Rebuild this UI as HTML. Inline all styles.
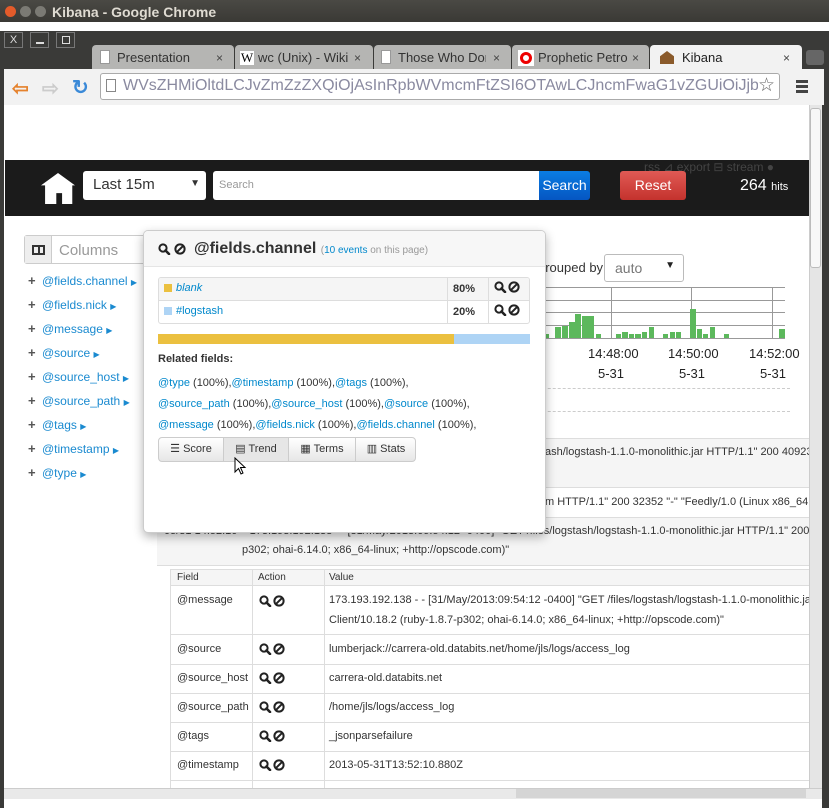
<!DOCTYPE html>
<html><head><meta charset="utf-8"><style>
*{box-sizing:border-box;margin:0;padding:0}
body{width:829px;height:808px;overflow:hidden;background:#3c3b37;font-family:"Liberation Sans",sans-serif;position:relative;font-size:12px}
.a{position:absolute}
.lnk{color:#0088cc}
.blue{color:#1a8ad0}
.cl div{position:relative;padding-left:16px;height:24px;line-height:24px;white-space:nowrap}
.cl b{position:absolute;left:2px;top:0;color:#555;font-size:13px}
</style></head><body>
<svg width="0" height="0" style="position:absolute"><defs>
<g id="mg"><circle cx="5" cy="5" r="3.6" fill="none" stroke="#222" stroke-width="2"/><path d="M7.5 7.5 L11 11" stroke="#222" stroke-width="2.6" stroke-linecap="round"/></g>
<g id="bn"><circle cx="6" cy="6" r="4.6" fill="none" stroke="#222" stroke-width="2"/><path d="M2.8 9.2 L9.2 2.8" stroke="#222" stroke-width="2"/></g>
</defs></svg>
<div class="a" style="left:0;top:0;width:829px;height:22px;background:linear-gradient(#4a4944,#3a3935)"></div>
<div class="a" style="left:5px;top:6px;width:11px;height:11px;border-radius:50%;background:#e45b2a"></div>
<div class="a" style="left:20px;top:6px;width:11px;height:11px;border-radius:50%;background:#7b7a74"></div>
<div class="a" style="left:35px;top:6px;width:11px;height:11px;border-radius:50%;background:#7b7a74"></div>
<div class="a" style="left:52px;top:4px;color:#dfdbd2;font-size:14px;font-weight:bold">Kibana - Google Chrome</div>
<div class="a" style="left:0;top:22px;width:829px;height:9px;background:#fff"></div>
<div class="a" style="left:0;top:31px;width:829px;height:777px;background:#3a3a38"></div>
<div class="a" style="left:4px;top:32px;width:19px;height:16px;border:1px solid #777;color:#ddd;font-size:11px;text-align:center;line-height:14px">X</div>
<div class="a" style="left:30px;top:32px;width:19px;height:16px;border:1px solid #777"><div class="a" style="left:5px;top:9px;width:8px;height:2px;background:#ddd"></div></div>
<div class="a" style="left:56px;top:32px;width:19px;height:16px;border:1px solid #777"><div class="a" style="left:5px;top:3px;width:8px;height:8px;border:1.5px solid #ddd"></div></div>
<div class="a" style="left:92px;top:45px;width:142px;height:25px;background:#b5b5b3;border-radius:4px 4px 0 0"></div>
<div class="a" style="left:235px;top:45px;width:138px;height:25px;background:#b5b5b3;border-radius:4px 4px 0 0"></div>
<div class="a" style="left:374px;top:45px;width:137px;height:25px;background:#b5b5b3;border-radius:4px 4px 0 0"></div>
<div class="a" style="left:512px;top:45px;width:137px;height:25px;background:#b5b5b3;border-radius:4px 4px 0 0"></div>
<div class="a" style="left:650px;top:45px;width:152px;height:25px;background:#f2f2f2;border-radius:4px 4px 0 0"></div>
<div class="a" style="left:806px;top:50px;width:18px;height:15px;background:#666;border-radius:3px"></div>
<div class="a" style="left:100px;top:50px;width:10px;height:14px;background:#fff;border:1px solid #999"></div>
<div class="a" style="left:117px;top:50px;font-size:13px;color:#333">Presentation</div><div class="a" style="left:216px;top:51px;color:#444">×</div>
<div class="a" style="left:240px;top:51px;width:14px;height:14px;background:#fff;font-family:'Liberation Serif';font-size:13px;line-height:14px;text-align:center">W</div>
<div class="a" style="left:258px;top:50px;font-size:13px;color:#333;width:90px;overflow:hidden;white-space:nowrap">wc (Unix) - Wikip</div><div class="a" style="left:354px;top:51px;color:#444">×</div>
<div class="a" style="left:381px;top:50px;width:10px;height:14px;background:#fff;border:1px solid #999"></div>
<div class="a" style="left:398px;top:50px;font-size:13px;color:#333;width:88px;overflow:hidden;white-space:nowrap">Those Who Don</div><div class="a" style="left:493px;top:51px;color:#444">×</div>
<div class="a" style="left:518px;top:50px;width:16px;height:16px;background:#fff"><div class="a" style="left:2px;top:2px;width:12px;height:12px;border:3px solid #e00;border-radius:50%"></div></div>
<div class="a" style="left:538px;top:50px;font-size:13px;color:#333;width:90px;overflow:hidden;white-space:nowrap">Prophetic Petro</div><div class="a" style="left:632px;top:51px;color:#444">×</div>
<div class="a" style="left:660px;top:51px;width:14px;height:13px;background:#8a5a2b;clip-path:polygon(50% 0,100% 40%,100% 100%,0 100%,0 40%)"></div>
<div class="a" style="left:682px;top:50px;font-size:13px;color:#222">Kibana</div><div class="a" style="left:783px;top:51px;color:#444">×</div>
<div class="a" style="left:4px;top:69px;width:820px;height:36px;background:#f2f2f2"></div>
<div class="a" style="left:12px;top:76px;color:#e5822d;font-size:20px;font-weight:bold">⇦</div>
<div class="a" style="left:42px;top:76px;color:#ccc;font-size:20px;font-weight:bold">⇨</div>
<div class="a" style="left:72px;top:75px;color:#3b8ad8;font-size:20px;font-weight:bold">↻</div>
<div class="a" style="left:100px;top:73px;width:680px;height:27px;background:#fff;border:1px solid #aaa;border-radius:3px"></div>
<div class="a" style="left:106px;top:79px;width:10px;height:13px;border:1px solid #888"></div>
<div class="a" style="left:123px;top:77px;font-size:16px;color:#8a8aa0;white-space:nowrap;width:635px;overflow:hidden">WVsZHMiOltdLCJvZmZzZXQiOjAsInRpbWVmcmFtZSI6OTAwLCJncmFwaG1vZGUiOiJjb3VudCJ9</div>
<div class="a" style="left:758px;top:74px;font-size:19px;color:#666">☆</div>
<div class="a" style="left:796px;top:80px;width:12px;height:3px;background:#444;box-shadow:0 5px #444,0 10px #444"></div>
<div class="a" style="left:4px;top:105px;width:805px;height:683px;background:#fff;overflow:hidden">
 <div class="a" style="left:1px;top:55px;width:804px;height:56px;background:#1b1b1b"></div>
 <div class="a" style="left:37px;top:68px;width:34px;height:31px;background:#fff;clip-path:polygon(50% 0,100% 40%,92% 40%,92% 100%,62% 100%,62% 65%,45% 65%,45% 100%,12% 100%,12% 40%,0 40%)"></div>
 <div class="a" style="left:79px;top:66px;width:123px;height:29px;background:#fff;border-radius:3px;font-size:15px;color:#333;padding:5px 10px">Last 15m<span style="position:absolute;right:6px;top:7px;font-size:10px">▼</span></div>
 <div class="a" style="left:209px;top:66px;width:327px;height:29px;background:#fff;border-radius:3px 0 0 3px;color:#999;font-size:11px;padding:8px 6px">Search</div>
 <div class="a" style="left:535px;top:66px;width:51px;height:29px;background:linear-gradient(#0a7de3,#0556c2);border-radius:0 3px 3px 0;color:#fff;font-size:14px;text-align:center;line-height:29px">Search</div>
 <div class="a" style="left:616px;top:66px;width:66px;height:29px;background:linear-gradient(#e05a55,#c4322d);border-radius:3px;color:#fff;font-size:14px;text-align:center;line-height:29px">Reset</div>
 <div class="a" style="left:640px;top:55px;color:#444;font-size:12px">rss ⊿ export ⊟ stream ●</div>
 <div class="a" style="left:736px;top:72px;color:#fff;font-size:16px">264 <span style="font-size:11px">hits</span></div>
 <div class="a" style="left:20px;top:130px;width:130px;height:29px;border:1px solid #ccc;border-radius:3px"><div class="a" style="left:0;top:0;width:27px;height:27px;background:#eee;border-right:1px solid #ccc"></div><div class="a" style="left:7px;top:9px;width:13px;height:10px;border:2px solid #333"></div><div class="a" style="left:13px;top:9px;width:2px;height:10px;background:#333"></div><div class="a" style="left:34px;top:6px;color:#999;font-size:15px">Columns</div></div>
 <div class="a cl" style="left:22px;top:164px;font-size:12px">
  <div><b>+</b><span class="blue">@fields.channel</span> <span class="blue" style="font-size:8px">▶</span></div>
  <div><b>+</b><span class="blue">@fields.nick</span> <span class="blue" style="font-size:8px">▶</span></div>
  <div><b>+</b><span class="blue">@message</span> <span class="blue" style="font-size:8px">▶</span></div>
  <div><b>+</b><span class="blue">@source</span> <span class="blue" style="font-size:8px">▶</span></div>
  <div><b>+</b><span class="blue">@source_host</span> <span class="blue" style="font-size:8px">▶</span></div>
  <div><b>+</b><span class="blue">@source_path</span> <span class="blue" style="font-size:8px">▶</span></div>
  <div><b>+</b><span class="blue">@tags</span> <span class="blue" style="font-size:8px">▶</span></div>
  <div><b>+</b><span class="blue">@timestamp</span> <span class="blue" style="font-size:8px">▶</span></div>
  <div><b>+</b><span class="blue">@type</span> <span class="blue" style="font-size:8px">▶</span></div>
 </div>
 <div class="a" style="left:534px;top:155px;font-size:13px;color:#333">grouped by</div>
 <div class="a" style="left:600px;top:149px;width:80px;height:28px;border:1px solid #bbb;border-radius:3px;color:#777;font-size:14px;padding:5px 10px">auto<span style="position:absolute;right:8px;top:5px;font-size:10px;color:#222">▼</span></div>
 <svg class="a" style="left:536px;top:175px" width="250" height="65">
  <g stroke="#999" stroke-width="1"><line x1="0" y1="7.5" x2="245" y2="7.5"/><line x1="0" y1="20.5" x2="245" y2="20.5"/><line x1="0" y1="32.5" x2="245" y2="32.5"/><line x1="0" y1="45.5" x2="245" y2="45.5"/><line x1="0" y1="58.5" x2="245" y2="58.5"/><line x1="71.5" y1="7" x2="71.5" y2="58"/><line x1="151.5" y1="7" x2="151.5" y2="58"/><line x1="232.5" y1="7" x2="232.5" y2="58"/></g>
  <g fill="#5cb85c"><rect x="5" y="54" width="4" height="4"/><rect x="15" y="47" width="6" height="11"/><rect x="22" y="46" width="6" height="12"/><rect x="29" y="42" width="6" height="16"/><rect x="35" y="34" width="6" height="24"/><rect x="42" y="36" width="6" height="22"/><rect x="48" y="36" width="6" height="22"/><rect x="56" y="54" width="5" height="4"/><rect x="76" y="54" width="5" height="4"/><rect x="82" y="52" width="6" height="6"/><rect x="89" y="54" width="5" height="4"/><rect x="95" y="54" width="6" height="4"/><rect x="102" y="52" width="5" height="6"/><rect x="109" y="47" width="5" height="11"/><rect x="123" y="54" width="5" height="4"/><rect x="130" y="52" width="5" height="6"/><rect x="136" y="52" width="5" height="6"/><rect x="150" y="29" width="6" height="29"/><rect x="157" y="49" width="5" height="9"/><rect x="163" y="54" width="5" height="4"/><rect x="170" y="47" width="5" height="11"/><rect x="184" y="54" width="5" height="4"/><rect x="239" y="49" width="6" height="9"/></g>
 </svg>
 <div class="a" style="left:530px;top:241px;font-size:13px;color:#222">0</div>
 <div class="a" style="left:584px;top:241px;font-size:13px;color:#222">14:48:00</div>
 <div class="a" style="left:664px;top:241px;font-size:13px;color:#222">14:50:00</div>
 <div class="a" style="left:745px;top:241px;font-size:13px;color:#222">14:52:00</div>
 <div class="a" style="left:594px;top:261px;font-size:13px;color:#222">5-31</div>
 <div class="a" style="left:675px;top:261px;font-size:13px;color:#222">5-31</div>
 <div class="a" style="left:756px;top:261px;font-size:13px;color:#222">5-31</div>
 <div class="a" style="left:150px;top:283px;width:636px;border-top:1px dashed #ccc"></div>
 <div class="a" style="left:150px;top:306px;width:636px;border-top:1px dashed #ccc"></div>
 <div class="a" style="left:153px;top:333px;width:652px;height:49px;background:#f5f5f5;border-top:1px solid #ddd"></div>
 <div class="a" style="left:541px;top:341px;font-size:11px;color:#333;white-space:nowrap">ash/logstash-1.1.0-monolithic.jar HTTP/1.1" 200 409239</div>
 <div class="a" style="left:153px;top:382px;width:652px;height:31px;border-top:1px solid #ddd;border-bottom:1px solid #ddd"></div>
 <div class="a" style="left:541px;top:391px;font-size:11px;color:#333;white-space:nowrap">m HTTP/1.1" 200 32352 "-" "Feedly/1.0 (Linux x86_64;</div>
 <div class="a" style="left:153px;top:413px;width:652px;height:48px;background:#f5f5f5;border-bottom:1px solid #ddd"></div>
 <div class="a" style="left:160px;top:420px;font-size:11px;color:#333;white-space:nowrap">05/31 14:52:10 &nbsp;&nbsp; 173.193.192.138 &nbsp;&nbsp;&nbsp; [31/May/2013:09:54:12 -0400] "GET /files/logstash/logstash-1.1.0-monolithic.jar HTTP/1.1" 200 409</div>
 <div class="a" style="left:238px;top:439px;font-size:11px;color:#333;white-space:nowrap">p302; ohai-6.14.0; x86_64-linux; +http://opscode.com)"</div>
 <div class="a" style="left:166px;top:464px;width:640px;height:230px;border:1px solid #ddd;font-size:11px;color:#333">
  <div class="a" style="left:0;top:0;width:640px;height:16px;background:#f5f5f5;border-bottom:1px solid #ddd"></div>
  <div class="a" style="left:81px;top:0;width:1px;height:230px;background:#ddd"></div>
  <div class="a" style="left:153px;top:0;width:1px;height:230px;background:#ddd"></div>
  <div class="a" style="left:6px;top:2px;font-size:10px">Field</div><div class="a" style="left:87px;top:2px;font-size:10px">Action</div><div class="a" style="left:158px;top:2px;font-size:10px">Value</div>
  <div class="a" style="left:0;top:64px;width:640px;border-top:1px solid #ddd"></div>
  <div class="a" style="left:0;top:94px;width:640px;border-top:1px solid #ddd"></div>
  <div class="a" style="left:0;top:123px;width:640px;border-top:1px solid #ddd"></div>
  <div class="a" style="left:0;top:152px;width:640px;border-top:1px solid #ddd"></div>
  <div class="a" style="left:0;top:181px;width:640px;border-top:1px solid #ddd"></div>
  <div class="a" style="left:0;top:210px;width:640px;border-top:1px solid #ddd"></div>
  <div class="a" style="left:6px;top:24px">@message</div><div class="a" style="left:158px;top:24px;white-space:nowrap">173.193.192.138 - - [31/May/2013:09:54:12 -0400] "GET /files/logstash/logstash-1.1.0-monolithic.jar H</div>
  <div class="a" style="left:158px;top:44px;white-space:nowrap">Client/10.18.2 (ruby-1.8.7-p302; ohai-6.14.0; x86_64-linux; +http://opscode.com)"</div>
  <div class="a" style="left:6px;top:73px">@source</div><div class="a" style="left:158px;top:73px">lumberjack://carrera-old.databits.net/home/jls/logs/access_log</div>
  <div class="a" style="left:6px;top:102px">@source_host</div><div class="a" style="left:158px;top:102px">carrera-old.databits.net</div>
  <div class="a" style="left:6px;top:131px">@source_path</div><div class="a" style="left:158px;top:131px">/home/jls/logs/access_log</div>
  <div class="a" style="left:6px;top:160px">@tags</div><div class="a" style="left:158px;top:160px">_jsonparsefailure</div>
  <div class="a" style="left:6px;top:189px">@timestamp</div><div class="a" style="left:158px;top:189px">2013-05-31T13:52:10.880Z</div>
  <svg class="a" style="left:88px;top:25px" width="28" height="12"><use href="#mg"/><use href="#bn" x="14"/></svg>
  <svg class="a" style="left:88px;top:73px" width="28" height="12"><use href="#mg"/><use href="#bn" x="14"/></svg>
  <svg class="a" style="left:88px;top:102px" width="28" height="12"><use href="#mg"/><use href="#bn" x="14"/></svg>
  <svg class="a" style="left:88px;top:131px" width="28" height="12"><use href="#mg"/><use href="#bn" x="14"/></svg>
  <svg class="a" style="left:88px;top:160px" width="28" height="12"><use href="#mg"/><use href="#bn" x="14"/></svg>
  <svg class="a" style="left:88px;top:189px" width="28" height="12"><use href="#mg"/><use href="#bn" x="14"/></svg>
 </div>
 <div class="a" style="left:139px;top:125px;width:403px;height:303px;background:#fff;border:1px solid #ccc;border-radius:5px;box-shadow:0 4px 10px rgba(0,0,0,.3);overflow:hidden">
  <div class="a" style="left:0;top:0;width:403px;height:36px;background:#f7f7f7;border-bottom:1px solid #e5e5e5"></div>
  <svg class="a" style="left:14px;top:12px" width="28" height="12"><use href="#mg"/><use href="#bn" x="16"/></svg>
  <div class="a" style="left:50px;top:9px;font-size:16px;font-weight:bold;color:#333;white-space:nowrap">@fields.channel <span style="font-size:10px;font-weight:normal;color:#999">(<span class="lnk">10 events</span> on this page)</span></div>
  <div class="a" style="left:14px;top:46px;width:372px;height:47px;border:1px solid #ddd;border-radius:3px;overflow:hidden;font-size:11px">
   <div class="a" style="left:0;top:0;width:372px;height:23px;background:#f5f5f5;border-bottom:1px solid #ddd"></div>
   <div class="a" style="left:288px;top:0;width:1px;height:47px;background:#ddd"></div>
   <div class="a" style="left:329px;top:0;width:1px;height:47px;background:#ddd"></div>
   <div class="a" style="left:5px;top:6px;width:8px;height:8px;background:#ebc03f"></div>
   <div class="a" style="left:17px;top:4px;font-style:italic" ><span class="lnk">blank</span></div>
   <div class="a" style="left:5px;top:29px;width:8px;height:8px;background:#aed4f5"></div>
   <div class="a" style="left:17px;top:27px"><span class="lnk">#logstash</span></div>
   <div class="a" style="left:294px;top:5px;font-weight:bold;color:#333">80%</div>
   <div class="a" style="left:294px;top:28px;font-weight:bold;color:#333">20%</div>
   <svg class="a" style="left:335px;top:3px" width="28" height="12"><use href="#mg"/><use href="#bn" x="14"/></svg>
   <svg class="a" style="left:335px;top:26px" width="28" height="12"><use href="#mg"/><use href="#bn" x="14"/></svg>
  </div>
  <div class="a" style="left:14px;top:103px;width:296px;height:10px;background:#ebc03f"></div>
  <div class="a" style="left:310px;top:103px;width:76px;height:10px;background:#aed4f5"></div>
  <div class="a" style="left:14px;top:122px;font-size:11px;font-weight:bold;color:#333">Related fields:</div>
  <div class="a" style="left:14px;top:142px;font-size:11px;color:#333;line-height:21px;white-space:nowrap">
   <span class="lnk">@type</span> (100%),<span class="lnk">@timestamp</span> (100%),<span class="lnk">@tags</span> (100%),<br>
   <span class="lnk">@source_path</span> (100%),<span class="lnk">@source_host</span> (100%),<span class="lnk">@source</span> (100%),<br>
   <span class="lnk">@message</span> (100%),<span class="lnk">@fields.nick</span> (100%),<span class="lnk">@fields.channel</span> (100%),
  </div>
  <div class="a" style="left:14px;top:206px;width:258px;height:25px;border:1px solid #ccc;border-radius:4px;background:linear-gradient(#fff,#e6e6e6);font-size:11px;color:#333">
   <div class="a" style="left:0;top:0;width:65px;height:23px;line-height:23px;text-align:center;border-right:1px solid #ccc">☰ Score</div>
   <div class="a" style="left:65px;top:0;width:65px;height:23px;line-height:23px;text-align:center;border-right:1px solid #ccc;background:#e6e6e6">▤ Trend</div>
   <div class="a" style="left:130px;top:0;width:67px;height:23px;line-height:23px;text-align:center;border-right:1px solid #ccc">▦ Terms</div>
   <div class="a" style="left:197px;top:0;width:60px;height:23px;line-height:23px;text-align:center">▥ Stats</div>
  </div>
  <svg class="a" style="left:90px;top:226px" width="14" height="20"><path d="M1 1 L1 15 L4.5 11.5 L7 17 L9 16 L6.5 10.5 L11 10.5 Z" fill="#fff" stroke="#000" stroke-width="1"/></svg>
 </div>
 <div class="a" style="left:0;top:683px;width:805px;height:1px;background:#ccc"></div>
</div>
<div class="a" style="left:809px;top:105px;width:13px;height:683px;background:#e5e5e5;border-left:1px solid #ccc"></div>
<div class="a" style="left:810px;top:108px;width:11px;height:160px;background:#f7f7f7;border:1px solid #bbb;border-radius:3px"></div>
<div class="a" style="left:4px;top:788px;width:818px;height:11px;background:#e9e9e9;border-top:1px solid #ccc"></div>
<div class="a" style="left:516px;top:789px;width:290px;height:9px;background:#d5d5d5"></div>
<div class="a" style="left:4px;top:799px;width:818px;height:9px;background:#fff"></div>
</body></html>
